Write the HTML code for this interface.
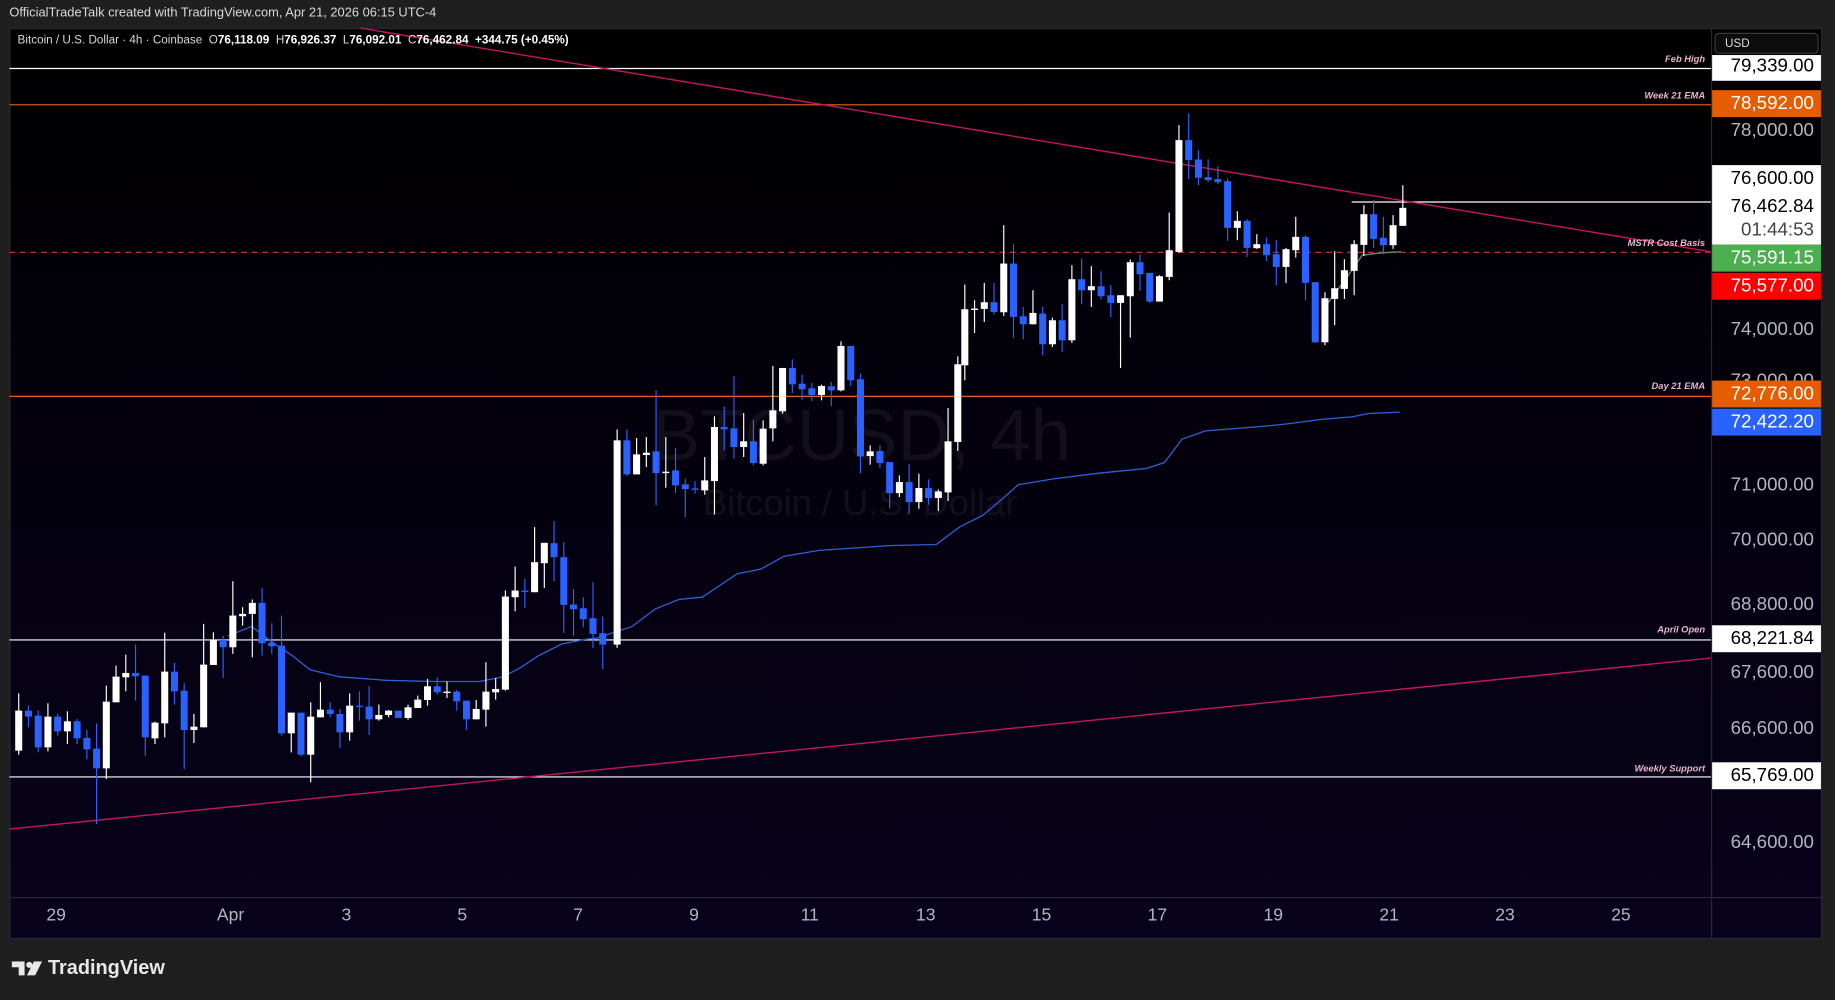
<!DOCTYPE html>
<html><head><meta charset="utf-8">
<style>
html,body{margin:0;padding:0;width:1835px;height:1000px;overflow:hidden;background:#1f1f1f;}
#w{position:absolute;left:0;top:0;width:1568px;height:854px;transform:scale(1.17028,1.17096);transform-origin:0 0;font-family:"Liberation Sans",sans-serif;}
.t{position:absolute;white-space:nowrap;}
.pl{position:absolute;left:1463px;width:93px;height:23px;line-height:23px;font-size:16px;text-align:right;padding-right:6px;box-sizing:border-box;color:#b2b5be;}
.tl{position:absolute;top:773px;font-size:15px;color:#b2b5be;transform:translateX(-50%);}
.lab{position:absolute;right:111px;font-size:8px;font-style:italic;font-weight:bold;color:#e8b4cc;}
</style></head><body>
<div id="w">
<div class="t" style="left:8px;top:5px;font-size:11px;color:#d8d8d8;">OfficialTradeTalk created with TradingView.com, Apr 21, 2026 06:15 UTC-4</div>
<svg width="1568" height="854" style="position:absolute;left:0;top:0">
<defs><linearGradient id="g" x1="0" y1="0" x2="0" y2="1"><stop offset="0" stop-color="#000000"/><stop offset="1" stop-color="#08021c"/></linearGradient></defs>
<rect x="8" y="24" width="1549" height="778" fill="url(#g)"/>
<line x1="1462.5" y1="24" x2="1462.5" y2="802" stroke="#2a2838"/>
<line x1="8" y1="766.5" x2="1557" y2="766.5" stroke="#2a2838"/>
<rect x="8.5" y="24.5" width="1548" height="777" fill="none" stroke="#2a2838"/>
<text x="736" y="393" font-size="62" fill="#ffffff" fill-opacity="0.06" text-anchor="middle" font-family="Liberation Sans">BTCUSD, 4h</text>
<text x="735" y="440" font-size="31" fill="#ffffff" fill-opacity="0.06" text-anchor="middle" font-family="Liberation Sans">Bitcoin / U.S. Dollar</text>
<line x1="8" y1="58.5" x2="1462" y2="58.5" stroke="#ffffff"/>
<line x1="8" y1="89.5" x2="1462" y2="89.5" stroke="#e8601c"/>
<line x1="8" y1="338.5" x2="1462" y2="338.5" stroke="#e8601c"/>
<line x1="8" y1="215.5" x2="1462" y2="215.5" stroke="#e03040" stroke-dasharray="5,4"/>
<line x1="8" y1="546.5" x2="1462" y2="546.5" stroke="#ffffff"/>
<line x1="8" y1="663.5" x2="1462" y2="663.5" stroke="#ffffff"/>
<line x1="1155" y1="172.5" x2="1462" y2="172.5" stroke="#ffffff"/>
<line x1="308" y1="24" x2="1462" y2="215" stroke="#c2185b" stroke-width="1.2"/>
<line x1="8" y1="708" x2="1462" y2="562" stroke="#c2185b" stroke-width="1.2"/>
<polyline fill="none" stroke="#2f5fd8" stroke-width="1.1" points="195,543 215,535 232,548 250,560 265,572 290,578 330,581 370,582 410,582 430,578 445,570 460,560 480,550 500,546 510,545 540,535 560,520 580,512 600,510 615,500 630,490 650,486 670,475 700,470 760,466 800,465 820,450 840,440 860,423 870,414 900,409 940,404 980,400 995,395 1010,375 1030,368 1080,364 1100,362 1130,358 1155,356 1170,353 1196,352"/>
<polyline fill="none" stroke="#6a8f6a" stroke-width="1.1" points="1133,261 1150,238 1164,218 1180,216 1197,215"/>
<g id="c"></g>
</svg>
<div class="t" style="left:15px;top:29px;font-size:10px;color:#d8d8d8;">Bitcoin / U.S. Dollar · 4h · Coinbase&nbsp; O<b style="color:#fff">76,118.09</b>&nbsp; H<b style="color:#fff">76,926.37</b>&nbsp; L<b style="color:#fff">76,092.01</b>&nbsp; C<b style="color:#fff">76,462.84</b>&nbsp; <b style="color:#fff">+344.75 (+0.45%)</b></div>
<div class="lab" style="top:46px">Feb High</div>
<div class="lab" style="top:77px">Week 21 EMA</div>
<div class="lab" style="top:203px">MSTR Cost Basis</div>
<div class="lab" style="top:325px">Day 21 EMA</div>
<div class="lab" style="top:533px">April Open</div>
<div class="lab" style="top:652px">Weekly Support</div>
<div class="t" style="left:1465px;top:28px;width:89px;height:18px;border:1px solid #3a3a3a;border-radius:4px;background:#0c0c0c;font-size:10px;color:#ddd;line-height:18px;padding-left:8px;box-sizing:border-box;">USD</div>
<div class="pl" style="top:47px;height:22px;line-height:20px;background:#fff;color:#000;">79,339.00</div>
<div class="pl" style="top:77px;background:#e65c00;color:#fff;">78,592.00</div>
<div class="pl" style="top:100px;">78,000.00</div>
<div style="position:absolute;left:1463px;top:141px;width:93px;height:68px;background:#fff;"></div>
<div class="pl" style="top:141px;color:#000;">76,600.00</div>
<div class="pl" style="top:165px;color:#000;">76,462.84</div>
<div class="pl" style="top:185px;color:#444;">01:44:53</div>
<div class="pl" style="top:209px;background:#4caf50;color:#fff;">75,591.15</div>
<div class="pl" style="top:233px;background:#ff0000;color:#fff;">75,577.00</div>
<div class="pl" style="top:270px;">74,000.00</div>
<div class="pl" style="top:314px;">73,000.00</div>
<div class="pl" style="top:325px;background:#e65c00;color:#fff;">72,776.00</div>
<div class="pl" style="top:349px;background:#2962ff;color:#fff;">72,422.20</div>
<div class="pl" style="top:403px;">71,000.00</div>
<div class="pl" style="top:450px;">70,000.00</div>
<div class="pl" style="top:505px;">68,800.00</div>
<div class="pl" style="top:534px;background:#fff;color:#000;">68,221.84</div>
<div class="pl" style="top:563px;">67,600.00</div>
<div class="pl" style="top:611px;">66,600.00</div>
<div class="pl" style="top:651px;background:#fff;color:#000;">65,769.00</div>
<div class="pl" style="top:708px;">64,600.00</div>
<div class="tl" style="left:48px">29</div><div class="tl" style="left:197px">Apr</div><div class="tl" style="left:296px">3</div><div class="tl" style="left:395px">5</div><div class="tl" style="left:494px">7</div><div class="tl" style="left:593px">9</div><div class="tl" style="left:692px">11</div><div class="tl" style="left:791px">13</div><div class="tl" style="left:890px">15</div><div class="tl" style="left:989px">17</div><div class="tl" style="left:1088px">19</div><div class="tl" style="left:1187px">21</div><div class="tl" style="left:1286px">23</div><div class="tl" style="left:1385px">25</div>
<svg width="28" height="14" style="position:absolute;left:10px;top:821px" viewBox="0 0 28 14"><path d="M0 0H11V12H6V5H0Z" fill="#e8e8e8"/><circle cx="15" cy="3" r="2.6" fill="#e8e8e8"/><path d="M19 0H26L20 12H13Z" fill="#e8e8e8"/></svg>
<div class="t" style="left:41px;top:817px;font-size:17px;font-weight:bold;color:#e8e8e8;">TradingView</div>
</div>
<script>
var A=[[0,705,748,705,748],[1,630,750,578,762],[0,630,648,615,680],[0,645,740,630,755],[1,648,740,608,752],[0,648,692,640,705],[1,662,692,632,730],[0,662,713,655,730],[0,712,746,688,776],[0,744,803,668,970],[1,603,803,555,835],[1,528,605,495,605],[1,517,530,462,572],[0,517,527,432,600],[0,525,710,525,765],[1,666,713,663,730],[1,513,668,396,710],[0,513,572,487,612],[0,570,688,548,805],[1,678,688,640,727],[1,492,680,370,680],[1,418,493,395,493],[0,418,440,405,532],[1,345,440,242,460],[1,340,347,320,375],[1,307,340,297,470],[0,307,428,263,465],[0,426,437,368,460],[0,435,698,345,705],[1,636,698,636,755],[0,636,762,636,767],[1,648,762,605,845],[1,627,650,545,650],[0,627,640,605,650],[0,640,695,625,742],[1,615,695,578,720],[0,615,618,572,660],[0,618,656,557,703],[1,643,656,612,660],[1,630,643,628,650],[0,630,652,630,652],[1,620,652,612,657],[1,597,622,585,617],[1,557,598,535,615],[0,557,575,530,582],[1,573,576,543,592],[0,573,602,568,630],[0,600,656,600,688],[1,625,656,598,656],[1,573,627,485,678],[1,565,575,532,597],[1,288,567,270,570],[1,270,290,198,332],[0,270,273,235,322],[1,185,275,80,275],[1,127,188,127,262],[0,128,170,62,242],[0,170,313,125,397],[0,312,326,265,405],[0,323,356,290,380],[0,353,400,245,442],[0,398,432,348,505]];
var B=[[1,330,1050,297,1050],[0,330,432,297,437],[1,372,432,323,432],[1,367,374,320,410],[0,363,428,180,525],[1,424,428,320,472],[0,420,465,353,488],[0,462,476,445,560],[0,474,476,452,490],[1,450,480,380,493],[1,290,452,258,552],[0,290,297,228,360],[0,294,350,138,385],[1,333,350,248,380],[0,333,398,268,405],[1,295,400,270,405],[1,240,294,107,333],[1,113,243,113,250],[0,113,162,87,188],[0,160,177,133,208],[0,174,194,158,212],[1,167,194,163,210],[0,168,180,155,228],[1,47,180,33,183],[0,47,150,47,167],[0,147,378,130,428],[1,363,377,345,403],[0,362,398,345,413],[0,395,488,395,533],[1,455,488,435,500],[0,455,515,400,550],[1,473,515,430,535],[0,473,503,447,523],[1,483,503,477,542],[1,333,486,233,512],[1,102,335,78,362]];
var C=[[1,627,795,553,840],[1,625,628,600,698],[1,606,626,548,665],[0,606,635,548,643],[1,490,636,375,647],[0,490,650,432,713],[0,648,672,620,717],[1,638,672,570,672],[0,640,732,620,765],[1,660,732,652,740],[0,660,720,612,755],[1,537,720,495,728],[0,537,570,475,612],[1,558,570,498,620],[0,558,588,513,598],[0,585,608,555,650],[1,585,608,585,803],[1,486,588,478,712],[0,486,522,462,572],[0,518,604,518,608],[1,528,604,525,604],[1,450,530,337,540],[1,120,455,75,458],[0,120,180,40,237],[0,178,233,150,255],[0,231,240,178,245],[0,237,246,198,252],[0,243,383,235,422],[1,362,383,333,420],[0,362,443,357,470],[1,432,444,402,446],[0,432,465,412,483],[0,462,500,420,555],[1,447,500,443,548],[1,410,450,350,472],[0,410,548,405,600],[0,546,726,546,728],[1,594,726,576,735],[1,564,596,453,675],[1,510,566,477,596],[1,432,512,420,585],[1,342,434,315,467],[0,342,416,300,443],[0,413,435,350,462],[1,375,435,345,446],[1,323,377,255,377]];
var g=document.getElementById('c'),h='',n=0,sp=8.317,x0=16-sp,dx=0;
function add(arr,off){arr.forEach(function(c){var x=x0+n*sp+dx;n++;var col=c[0]?'#ffffff':'#2962ff';var f=function(v){return off+v/3.51;};var bt=f(c[1]),bb=f(c[2]),wt=f(c[3]),wb=f(c[4]);if(bb-bt<1.2)bb=bt+1.2;if(x<10)return;h+='<line x1="'+x+'" x2="'+x+'" y1="'+wt+'" y2="'+wb+'" stroke="'+col+'" stroke-width="1"/>'+'<rect x="'+(x-3)+'" y="'+bt+'" width="6" height="'+(bb-bt)+'" fill="'+col+'"/>';});}
add(A,427.4);
dx=4;n=63;add(B.slice(1),282.05);
(function(){var x=x0+62*sp+4;var bt=282.05+330/3.51,bb=427.4+432/3.51;h+='<line x1="'+x+'" x2="'+x+'" y1="'+(282.05+297/3.51)+'" y2="'+(427.4+442/3.51)+'" stroke="#fff"/><rect x="'+(x-3)+'" y="'+bt+'" width="6" height="'+(bb-bt)+'" fill="#fff"/>';})();
dx=10;n=97;add(C,85.47);
g.innerHTML=h;
</script>
</body></html>
